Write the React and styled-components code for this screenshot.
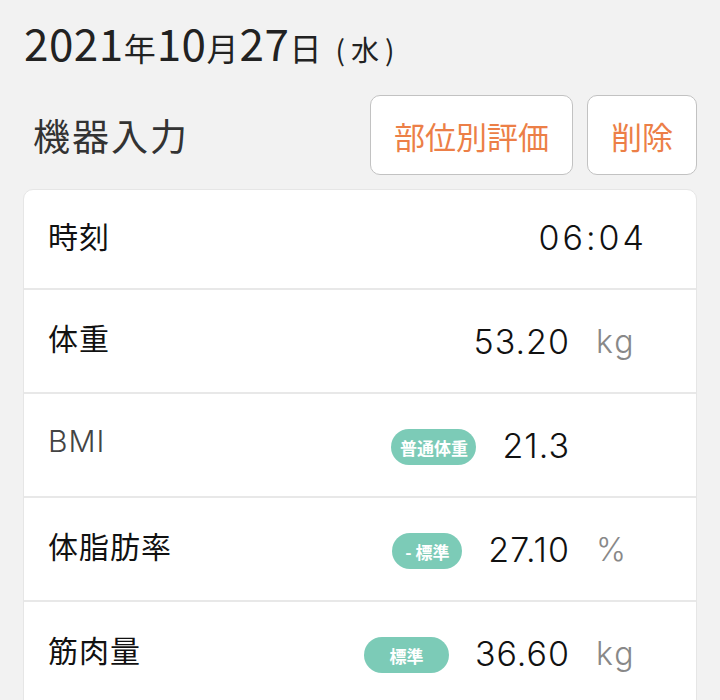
import React from 'react';
import styled, { createGlobalStyle } from 'styled-components';

const GlobalStyle = createGlobalStyle`
  html, body {
    margin: 0;
    padding: 0;
    background: #f2f2f2;
  }
  body {
    font-family: "Noto Sans CJK JP", "Noto Sans", sans-serif;
    color: #222;
  }
`;

const rows = [
  { label: '時刻', value: '06:04', time: true },
  { label: '体重', value: '53.20', unit: 'kg' },
  { label: 'BMI', value: '21.3', badge: '普通体重', badgeWidth: 85, light: true },
  { label: '体脂肪率', value: '27.10', unit: '%', badge: '- 標準', badgeWidth: 70 },
  { label: '筋肉量', value: '36.60', unit: 'kg', badge: '標準', badgeWidth: 85 },
];

const App = () => {
  return (
    <Page>
      <GlobalStyle />
      <DateLine>
        <Num>2021</Num>
        <Kanji>年</Kanji>
        <Num>10</Num>
        <Kanji>月</Kanji>
        <Num>27</Num>
        <Kanji>日</Kanji>
        <Weekday>(水)</Weekday>
      </DateLine>
      <Toolbar>
        <Title>機器入力</Title>
        <Actions>
          <Button>部位別評価</Button>
          <Button>削除</Button>
        </Actions>
      </Toolbar>
      <Card>
        {rows.map((row) => (
          <Row key={row.label}>
            <Label $light={row.light}>{row.label}</Label>
            <Right>
              {row.badge && <Badge $w={row.badgeWidth}>{row.badge}</Badge>}
              <Value $time={row.time}>{row.value}</Value>
              {!row.time && <Unit>{row.unit}</Unit>}
            </Right>
          </Row>
        ))}
      </Card>
    </Page>
  );
};

const Page = styled.div`
  width: 720px;
  height: 700px;
  overflow: hidden;
  box-sizing: border-box;
  padding: 20px 23px 0 23px;
`;

const DateLine = styled.div`
  display: flex;
  align-items: baseline;
  padding-left: 1px;
  height: 58px;
  color: #222;
`;

const Num = styled.span`
  font-family: "Noto Sans CJK JP", sans-serif;
  font-size: 44px;
  font-weight: 400;
  letter-spacing: 0.5px;
  line-height: 1;
`;

const Kanji = styled.span`
  font-size: 32px;
  font-weight: 400;
  line-height: 1;
  margin: 0 1px 0 0;
`;

const Weekday = styled.span`
  font-size: 28px;
  font-weight: 400;
  line-height: 1;
  margin-left: 13px;
  letter-spacing: 6px;
`;

const Toolbar = styled.div`
  display: flex;
  align-items: center;
  justify-content: space-between;
  margin-top: 17px;
`;

const Title = styled.h1`
  margin: 0 0 0 10px;
  font-size: 37px;
  font-weight: 400;
  letter-spacing: 2px;
  color: #333;
  line-height: 1;
  padding-top: 0;
`;

const Actions = styled.div`
  display: flex;
  gap: 14px;
`;

const Button = styled.button`
  height: 80px;
  padding: 0 23px;
  background: #fff;
  border: 1px solid #c2c2c2;
  border-radius: 10px;
  font-family: "Noto Sans CJK JP", sans-serif;
  font-size: 31px;
  color: #ec7f47;
  line-height: 1;
`;

const Card = styled.div`
  margin-top: 14px;
  background: #fff;
  border: 1px solid #e6e6e6;
  border-radius: 10px 10px 0 0;
`;

const Row = styled.div`
  display: flex;
  align-items: center;
  justify-content: space-between;
  height: 102px;
  padding: 0 52px 0 24px;
  border-bottom: 2px solid #e8e8e8;
  &:first-child {
    height: 98px;
  }
`;

const Label = styled.div`
  font-family: ${(p) => (p.$light ? '"Inter", "Noto Sans", sans-serif' : '"Noto Sans CJK JP", sans-serif')};
  font-size: 30px;
  font-weight: ${(p) => (p.$light ? 300 : 400)};
  letter-spacing: 1px;
  color: ${(p) => (p.$light ? '#444' : '#111')};
  margin-top: -8px;
`;

const Right = styled.div`
  display: flex;
  align-items: center;
`;

const Badge = styled.span`
  display: inline-flex;
  align-items: center;
  justify-content: center;
  height: 36px;
  width: ${(p) => p.$w}px;
  box-sizing: border-box;
  border-radius: 18px;
  background: #7ccbb7;
  color: #fff;
  font-size: 17px;
  font-weight: 700;
  white-space: pre;
  margin-right: 26px;
  margin-top: 4px;
`;

const Value = styled.span`
  font-family: "Inter", "Noto Sans", sans-serif;
  font-size: 34px;
  font-weight: 300;
  color: #111;
  letter-spacing: ${(p) => (p.$time ? '3px' : '1px')};
  text-align: right;
  margin-right: ${(p) => (p.$time ? '-3px' : '0')};
  margin-top: ${(p) => (p.$time ? '-4px' : '0')};
`;

const Unit = styled.span`
  display: inline-block;
  width: 48px;
  margin-left: 26px;
  font-family: "Inter", "Noto Sans", sans-serif;
  font-size: 32px;
  font-weight: 300;
  color: #888;
  letter-spacing: 2px;
`;

export default App;
